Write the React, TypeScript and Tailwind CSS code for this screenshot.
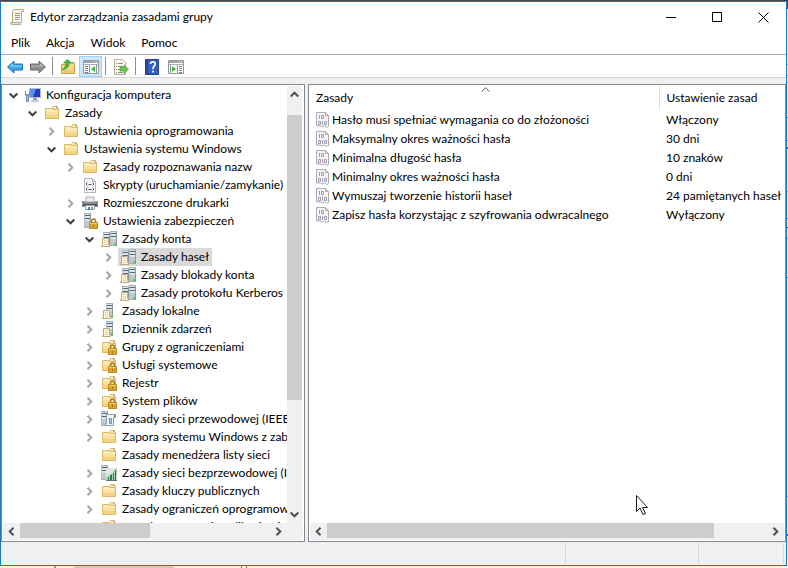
import { useState, type ReactNode } from 'react'

type IconName = 'computer' | 'folder' | 'script' | 'printer' | 'serverLock' | 'servers' | 'serverPage' | 'folderLock' | 'wired' | 'wireless'

interface TreeNode {
  label: string
  icon: IconName
  state?: 'open' | 'closed'
  children?: TreeNode[]
}

const TREE: TreeNode[] = [
  {
    label: 'Konfiguracja komputera',
    icon: 'computer',
    state: 'open',
    children: [
      {
        label: 'Zasady',
        icon: 'folder',
        state: 'open',
        children: [
          { label: 'Ustawienia oprogramowania', icon: 'folder', state: 'closed' },
          {
            label: 'Ustawienia systemu Windows',
            icon: 'folder',
            state: 'open',
            children: [
              { label: 'Zasady rozpoznawania nazw', icon: 'folder', state: 'closed' },
              { label: 'Skrypty (uruchamianie/zamykanie)', icon: 'script' },
              { label: 'Rozmieszczone drukarki', icon: 'printer', state: 'closed' },
              {
                label: 'Ustawienia zabezpieczeń',
                icon: 'serverLock',
                state: 'open',
                children: [
                  {
                    label: 'Zasady konta',
                    icon: 'servers',
                    state: 'open',
                    children: [
                      { label: 'Zasady haseł', icon: 'servers', state: 'closed' },
                      { label: 'Zasady blokady konta', icon: 'servers', state: 'closed' },
                      { label: 'Zasady protokołu Kerberos', icon: 'servers', state: 'closed' },
                    ],
                  },
                  { label: 'Zasady lokalne', icon: 'serverPage', state: 'closed' },
                  { label: 'Dziennik zdarzeń', icon: 'serverPage', state: 'closed' },
                  { label: 'Grupy z ograniczeniami', icon: 'folderLock', state: 'closed' },
                  { label: 'Usługi systemowe', icon: 'folderLock', state: 'closed' },
                  { label: 'Rejestr', icon: 'folderLock', state: 'closed' },
                  { label: 'System plików', icon: 'folderLock', state: 'closed' },
                  { label: 'Zasady sieci przewodowej (IEEE', icon: 'wired', state: 'closed' },
                  { label: 'Zapora systemu Windows z zab', icon: 'folder', state: 'closed' },
                  { label: 'Zasady menedżera listy sieci', icon: 'folder' },
                  { label: 'Zasady sieci bezprzewodowej (I', icon: 'wireless', state: 'closed' },
                  { label: 'Zasady kluczy publicznych', icon: 'folder', state: 'closed' },
                  { label: 'Zasady ograniczeń oprogramow', icon: 'folder', state: 'closed' },
                  { label: 'Zasady sterowania aplikacjami', icon: 'folder' },
                ],
              },
            ],
          },
        ],
      },
    ],
  },
]

const POLICIES = [
  { name: 'Hasło musi spełniać wymagania co do złożoności', value: 'Włączony' },
  { name: 'Maksymalny okres ważności hasła', value: '30 dni' },
  { name: 'Minimalna długość hasła', value: '10 znaków' },
  { name: 'Minimalny okres ważności hasła', value: '0 dni' },
  { name: 'Wymuszaj tworzenie historii haseł', value: '24 pamiętanych haseł' },
  { name: 'Zapisz hasła korzystając z szyfrowania odwracalnego', value: 'Wyłączony' },
]

function Svg({ children }: { children: ReactNode }) {
  return (
    <svg width="16" height="16" viewBox="0 0 16 16" className="shrink-0" aria-hidden="true">
      {children}
    </svg>
  )
}

const folderShape = (
  <>
    <path d="M1.500 3.500h7l1-2h4v2h1v10h-13z" fill="#f9e0a0" stroke="#d9b767" />
    <path d="M2 4h12v3H2z" fill="#fdebb8" />
    <path d="M10 2h2v1h-2z" fill="#fff" />
    <path d="M12 2h1v1h-1z" fill="#4a9fe0" />
    <path d="M8 4.500h6" stroke="#e0bd70" />
    <path d="M2 10h12v3H2z" fill="#f4d382" />
  </>
)

const lockShape = (
  <>
    <path d="M9.500 10V8a2 2 0 0 1 4 0v2" fill="none" stroke="#a87a1c" strokeWidth="1.500" />
    <path d="M7.500 9.500h8v6h-8z" fill="#dba32f" stroke="#b98a22" />
    <path d="M8 10h7v1H8z" fill="#f3cc66" />
    <path d="M11 12h1v2h-1z" fill="#9a7018" />
  </>
)

const towerShape = (
  <>
    <path d="M0 0h7v15H0z" fill="#dfe6e9" />
    <path d="M0 0h7v1H0zM0 14h7v1H0z" fill="#a3b0b6" />
    <path d="M0 1h1v13H0z" fill="#b4c0c6" />
    <path d="M1 2h5v1H1zM1 5h5v1H1z" fill="#4f6672" />
    <path d="M1 8h5v6H1z" fill="#bccad0" />
    <path d="M6 1h1v14H6z" fill="#8799a3" />
  </>
)

const pageShape = (
  <>
    <path d="M2.500 7.500h6v6h1v2h-8v-1h1z" fill="#fdf4de" stroke="#c3a878" />
    <path d="M4 9.500h3M4 11.500h3M4 13.500h3" stroke="#e6d3ab" />
  </>
)

const ICONS: Record<IconName, ReactNode> = {
  folder: folderShape,
  folderLock: (
    <>
      {folderShape}
      {lockShape}
    </>
  ),
  computer: (
    <>
      <path d="M4.500 1.500h11v9h-11z" fill="#1c3fc4" stroke="#b4bdc9" />
      <path d="M5 2h6l-3 8H5z" fill="#5f8df2" />
      <path d="M8 11h4v2H8z" fill="#8d99a5" />
      <path d="M6 13h8v2H6z" fill="#c3cbd3" />
      <path d="M1.500 8.500h2v6h-2z" fill="#b7c9d8" stroke="#6d87a0" />
      <path d="M0 4h1v3h3V4h1v4L4 9H1L0 8z" fill="#8193a5" />
    </>
  ),
  script: (
    <>
      <path d="M2.500 1.500h8l3 3v11h-11z" fill="#f9fafb" stroke="#b3b7bd" />
      <path d="M10.500 1.500v3h3" fill="none" stroke="#b3b7bd" />
      <path d="M5.500 5.500L4 7l1.500 1.500M10.500 5.500L12 7l-1.500 1.500M5.500 10.500L4 12l1.500 1.500M10.500 10.500L12 12l-1.500 1.500" fill="none" stroke="#4d535e" />
      <path d="M6.500 7.500h3M6.500 12.500h3" stroke="#4d535e" />
    </>
  ),
  printer: (
    <>
      <path d="M4 2h8v5H4z" fill="#eceff1" stroke="#a9adb2" />
      <path d="M0 6h3v1h10V6h3v6H0z" fill="#8a8f94" />
      <path d="M1 9h14v2H1z" fill="#4c5156" />
      <path d="M3.500 10.500h9v4h-9z" fill="#fff" stroke="#9ba1a6" />
      <path d="M6 12h2v3H6z" fill="#2f8ed2" />
      <path d="M9 12h2v2H9z" fill="#5cb25b" />
    </>
  ),
  serverLock: (
    <>
      <g transform="translate(2 0)">{towerShape}</g>
      {lockShape}
    </>
  ),
  servers: (
    <>
      <g transform="translate(2 1)">{towerShape}</g>
      <g transform="translate(9 0)">{towerShape}</g>
      <path d="M13 12h2v2h-2z" fill="#4fd43a" />
      <g transform="translate(-1 0)">{pageShape}</g>
    </>
  ),
  serverPage: (
    <>
      <g transform="translate(5 0)">{towerShape}</g>
      <path d="M10 12h2v2h-2z" fill="#4fd43a" />
      {pageShape}
    </>
  ),
  wired: (
    <>
      {towerShape}
      <path d="M5.500 3.500h9v3h-2v8h-8v-2h1z" fill="#f2f5f7" stroke="#8f9da6" />
      <path d="M8.500 7.500h2v5h-2z" fill="#b8d6ea" stroke="#5d93b8" />
      <path d="M13 4h2v2h-2z" fill="#7b8992" />
    </>
  ),
  wireless: (
    <>
      {towerShape}
      <path d="M5 3h11v12H5z" fill="#dfe9e3" />
      <path d="M5 15V12l11-9v12z" fill="#b5d6bd" />
      <path d="M7 12h1v3H7zM9 10h2v5H9zM12 8h1v7h-1zM14 5h1v10h-1z" fill="#1f7a41" />
      <path d="M5 15.500h11" stroke="#56776a" />
    </>
  ),
}

interface ChevronProps {
  dir: 'up' | 'down' | 'left' | 'right'
  className?: string
  thin?: boolean
}

function Chevron({ dir, className, thin }: ChevronProps) {
  const paths = {
    up: 'M.7 6.500l3.800-3.800 3.800 3.800',
    down: 'M.7 2.500l3.800 3.800 3.800-3.800',
    left: 'M6.500 .7L2.700 4.500l3.800 3.800',
    right: 'M2.500 .7l3.800 3.800-3.800 3.800',
  }
  return (
    <svg width="9" height="9" viewBox="0 0 9 9" className={className} aria-hidden="true">
      <path d={paths[dir]} fill="none" stroke="currentColor" strokeWidth={thin ? 1 : 2} />
    </svg>
  )
}

interface TreeProps {
  nodes: TreeNode[]
  selected: string
  onSelect: (label: string) => void
}

function Tree({ nodes, selected, onSelect }: TreeProps) {
  return (
    <ul>
      {nodes.map((node) => (
        <li key={node.label}>
          <div className="flex h-[18px] items-center">
            {node.state ? (
              <button
                type="button"
                aria-label={node.state === 'open' ? 'Zwiń' : 'Rozwiń'}
                className="flex w-5 shrink-0 justify-center"
              >
                <Chevron
                  dir={node.state === 'open' ? 'down' : 'right'}
                  className={node.state === 'open' ? 'text-[#404040]' : 'text-[#a6a6a6]'}
                />
              </button>
            ) : (
              <span className="w-5 shrink-0" />
            )}
            <button
              type="button"
              onClick={() => onSelect(node.label)}
              className={`flex h-[18px] items-center gap-[5px] pr-[3px] pl-[2px] whitespace-nowrap ${selected === node.label ? 'bg-[#d9d9d9]' : ''}`}
            >
              <Svg>{ICONS[node.icon]}</Svg>
              {node.label}
            </button>
          </div>
          {node.children && (
            <div className="pl-[19px]">
              <Tree nodes={node.children} selected={selected} onSelect={onSelect} />
            </div>
          )}
        </li>
      ))}
    </ul>
  )
}

function HScroll({ thumb }: { thumb: string }) {
  return (
    <div className="flex h-[17px] min-w-0 flex-1 bg-[#f0f0f0] text-[#505050]">
      <button type="button" aria-label="Przewiń w lewo" className="flex w-[17px] items-center justify-center">
        <Chevron dir="left" />
      </button>
      <div className="flex-1 pb-0.5">
        <div className={`h-full bg-[#cdcdcd] ${thumb}`} />
      </div>
      <button type="button" aria-label="Przewiń w prawo" className="flex w-[17px] items-center justify-center">
        <Chevron dir="right" />
      </button>
    </div>
  )
}

function ToolButton({ label, active, children }: { label: string; active?: boolean; children: ReactNode }) {
  return (
    <button
      type="button"
      aria-label={label}
      className={`flex h-[21px] w-[23px] items-center justify-center border pt-[2px] ${active ? 'border-[#99d1ff] bg-[#cce8ff]' : 'border-transparent'}`}
    >
      {children}
    </button>
  )
}

function Divider() {
  return <div className="mx-[3px] h-[18px] w-px bg-[#8c8c8c]" />
}

const windowPane = (
  <>
    <path d="M0.500 1.500h15v13h-15z" fill="#fff" stroke="#8f979f" />
    <path d="M1 2h14v2H1z" fill="#98a3ae" />
    <path d="M11 2h1v1h-1zM13 2h1v1h-1z" fill="#fff" />
    <path d="M1 5.500h14" stroke="#a9b1b9" />
  </>
)

function Toolbar() {
  return (
    <div className="flex h-[23px] shrink-0 items-center border-b border-[#d7d7d7] bg-white pl-[2px]">
      <ToolButton label="Wstecz">
        <Svg>
          <path d="M0.500 8L7 2v3h8.500v6H7v3z" fill="#35a6e6" stroke="#1d6fae" />
          <path d="M2.500 7.500L6 4v2.500h8.500v1z" fill="#8fd6f8" />
        </Svg>
      </ToolButton>
      <ToolButton label="Dalej">
        <Svg>
          <path d="M15.500 8L9 2v3H0.500v6H9v3z" fill="#8f8f8f" stroke="#6b6b6b" />
          <path d="M13.500 7.500L10 4v2.500H1.500v1z" fill="#b9b9b9" />
        </Svg>
      </ToolButton>
      <Divider />
      <ToolButton label="W górę o jeden poziom">
        <Svg>
          <path d="M1.500 5.500h6l1-2h6v11h-13z" fill="#f5d789" stroke="#c9a352" />
          <path d="M12 4h1v1h-1z" fill="#4a9fe0" />
          <path d="M2 11h12v3H2z" fill="#efc971" />
          <path d="M2 10.500C5 9 6 7 6 4H3.500L7.500 0.500l4 3.500H9c0 4-2.500 6.500-7 6.500z" fill="#4dbb35" stroke="#268a1f" strokeWidth=".6" />
        </Svg>
      </ToolButton>
      <ToolButton label="Pokaż lub ukryj drzewo konsoli" active>
        <Svg>
          {windowPane}
          <path d="M2 7.500h3M2 9.500h3M2 11.500h3M2 13.500h3" stroke="#6d8196" />
          <path d="M6.500 6v8M13.500 6v8" stroke="#8b98a6" />
          <path d="M12 7v6L8 10z" fill="#43b62c" />
        </Svg>
      </ToolButton>
      <Divider />
      <ToolButton label="Eksportuj listę">
        <Svg>
          <path d="M1.500 0.500h8l3 3v12h-11z" fill="#fdf9e6" stroke="#b5ad93" />
          <path d="M3 4.500h1M5 4.500h5M3 7.500h1M5 7.500h5M3 10.500h1M5 10.500h3M3 13.500h1M5 13.500h5" stroke="#85889a" />
          <path d="M7 8.500h4V6l4.500 4.200L11 14.500V12H7z" fill="#68cc45" stroke="#35952a" strokeWidth=".6" />
        </Svg>
      </ToolButton>
      <Divider />
      <div className="flex gap-px pl-px">
        <ToolButton label="Pomoc">
          <svg width="14" height="16" viewBox="0 0 14 16" aria-hidden="true">
            <path d="M0.500 0.500h13v15H0.500z" fill="#3460c4" stroke="#20408f" />
            <path d="M1 1h2v14H1z" fill="#24489e" />
            <path d="M5.500 5c.2-3 5-2.800 4.600 0C10 7 8 7 8 10M8 11.500v2" fill="none" stroke="#fff" strokeWidth="1.700" />
          </svg>
        </ToolButton>
        <ToolButton label="Pokaż lub ukryj okienko akcji">
          <Svg>
            {windowPane}
            <path d="M11 7.500h3M11 9.500h3M11 11.500h3M11 13.500h3" stroke="#6d8196" />
            <path d="M9.500 6v8M2.500 6v8" stroke="#8b98a6" />
            <path d="M4 7v6l4-3z" fill="#43b62c" />
          </Svg>
        </ToolButton>
      </div>
    </div>
  )
}

function PolicyIcon() {
  return (
    <svg width="13" height="16" viewBox="0 0 13 16" className="shrink-0" aria-hidden="true">
      <path d="M0.500 0.500h9l3 3v11l-2 1-2-1.500-2 1-2-1H0.500z" fill="#f6f5f6" stroke="#aeaaae" />
      <path d="M9.500 0.500v3h3" fill="none" stroke="#aeaaae" />
      <path d="M3.500 3v4M5.500 3.500h2v3h-2zM2.500 9.500h2v3h-2zM6.500 9v4M8.500 9.500h2v3h-2z" fill="none" stroke="#a09bb0" />
    </svg>
  )
}

export default function App() {
  const [selected, setSelected] = useState('Zasady haseł')

  return (
    <div className="relative flex h-screen flex-col bg-[#f3f3f3] pr-px font-['Lato','Noto_Sans',sans-serif] text-[12px] leading-4 text-black">
      <div className="h-px shrink-0 bg-[#3c4650]" />
      <div className="flex min-h-0 flex-1 flex-col border border-[#1979ca] bg-[#f0f0f0]">
        <header className="flex h-[30px] shrink-0 items-center bg-white pl-2">
          <Svg>
            <path d="M4.500 0.500h10v2h-2v11h-9v-11z" fill="#fbf6e4" stroke="#b5ab91" />
            <path d="M1.500 13.500h9l1 2h-9z" fill="#e9dfc1" stroke="#b5ab91" />
            <path d="M6 4.500h5M6 6.500h5M6 8.500h5M6 10.500h4" stroke="#a39e90" />
          </Svg>
          <h1 className="flex-1 pl-[5px]">Edytor zarządzania zasadami grupy</h1>
          <button type="button" aria-label="Minimalizuj" className="flex h-full w-[46px] items-center justify-center">
            <svg width="11" height="11" viewBox="0 0 11 11"><path d="M0 5.500h10" stroke="#000" /></svg>
          </button>
          <button type="button" aria-label="Maksymalizuj" className="flex h-full w-[46px] items-center justify-center">
            <svg width="11" height="11" viewBox="0 0 11 11"><path d="M0.500 0.500h9v9h-9z" fill="none" stroke="#000" /></svg>
          </button>
          <button type="button" aria-label="Zamknij" className="flex h-full w-[46px] items-center justify-center">
            <svg width="11" height="11" viewBox="0 0 11 11"><path d="M0.500 0.500l10 10M10.500 0.500l-10 10" stroke="#000" /></svg>
          </button>
        </header>
        <nav className="flex h-[23px] shrink-0 items-center gap-4 border-b border-[#aeaeae] bg-white px-[10px]">
          <button type="button">Plik</button>
          <button type="button">Akcja</button>
          <button type="button">Widok</button>
          <button type="button">Pomoc</button>
        </nav>
        <Toolbar />

        <main className="flex min-h-0 flex-1 gap-[3px] pt-[6px]">
          <section className="flex w-[304px] shrink-0 flex-col border border-[#828790] bg-white p-px">
            <div className="flex min-h-0 flex-1">
              <div className="min-w-0 flex-1 overflow-hidden">
                <Tree nodes={TREE} selected={selected} onSelect={setSelected} />
              </div>
              <div className="mr-px flex w-[15px] shrink-0 flex-col bg-[#f0f0f0] text-[#505050]">
                <button type="button" aria-label="Przewiń w górę" className="flex h-[17px] items-center justify-center">
                  <Chevron dir="up" />
                </button>
                <div className="flex-1 pt-3">
                  <div className="h-[73%] bg-[#cdcdcd]" />
                </div>
                <button type="button" aria-label="Przewiń w dół" className="flex h-[17px] items-center justify-center">
                  <Chevron dir="down" />
                </button>
              </div>
            </div>
            <div className="flex shrink-0 bg-[#f0f0f0] pr-4">
              <HScroll thumb="w-[52%]" />
            </div>
          </section>

          <section className="flex min-w-0 flex-1 flex-col border border-[#828790] bg-white p-px">
            <div className="relative min-h-0 flex-1 overflow-hidden">
              <Chevron dir="up" thin className="absolute -top-px left-[171px] text-[#505050]" />
              <table className="w-full table-fixed border-collapse text-left whitespace-nowrap">
                <thead>
                  <tr className="h-6">
                    <th className="w-[349px] border-r border-[#e0e0e0] px-[6px] font-normal">Zasady</th>
                    <th className="pl-[7px] font-normal">Ustawienie zasad</th>
                  </tr>
                </thead>
                <tbody>
                  {POLICIES.map((p) => (
                    <tr key={p.name} className="h-[19px]">
                      <td className="pl-[6px]">
                        <div className="flex items-center gap-[3px]">
                          <PolicyIcon />
                          {p.name}
                        </div>
                      </td>
                      <td className="pl-[7px]">{p.value}</td>
                    </tr>
                  ))}
                </tbody>
              </table>
            </div>
            <div className="flex shrink-0">
              <HScroll thumb="w-[88%]" />
            </div>
          </section>
        </main>

        <footer className="flex h-[23px] shrink-0 justify-end py-px">
          <div className="w-[133px] border-l border-[#d7d7d7]" />
          <div className="w-[86px] border-x border-[#d7d7d7]" />
          <div className="w-[2px]" />
        </footer>
      </div>

      {/* slivers of the window behind */}
      <div className="flex h-0.5 shrink-0 pl-[54px]">
        <div className="w-5 border-l-2 border-[#8f9297]" />
        <div className="w-[100px] bg-[#c9ccd0]" />
        <div className="ml-[67px] w-1.5 border-x border-[#6f7277]" />
      </div>
      <svg width="1" height="568" viewBox="0 0 1 568" className="absolute top-0 right-0" aria-hidden="true">
        <path d="M0 0h1v9H0z" fill="#3c4650" />
        <path d="M0 64h1v1H0zM0 75h1v1H0zM0 82h1v1H0zM0 117h1v1H0zM0 140h1v1H0zM0 191h1v1H0zM0 218h1v1H0zM0 238h1v1H0zM0 277h1v1H0zM0 496h1v1H0z" fill="#7fb3e0" />
        <path d="M0 147h1v2H0zM0 227h1v1H0zM0 534h1v2H0z" fill="#2c5f96" />
      </svg>

      <svg width="14" height="21" viewBox="0 0 14 21" className="pointer-events-none absolute top-[495px] left-[636px]" aria-hidden="true">
        <path d="M0.500 0.500v16l3.500-3.500 3 6.500 2.500-1-3-6h5z" fill="#fff" stroke="#1a1a24" />
      </svg>
    </div>
  )
}
